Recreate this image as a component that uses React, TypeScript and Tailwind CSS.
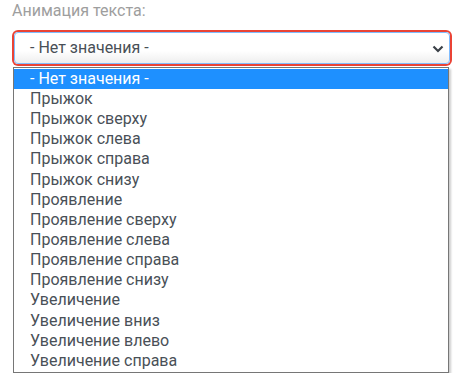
import React from "react";

const items = [
  "Прыжок",
  "Прыжок сверху",
  "Прыжок слева",
  "Прыжок справа",
  "Прыжок снизу",
  "Проявление",
  "Проявление сверху",
  "Проявление слева",
  "Проявление справа",
  "Проявление снизу",
  "Увеличение",
  "Увеличение вниз",
  "Увеличение влево",
  "Увеличение справа",
];

export default function App() {
  return (
    <div
      className="relative w-[453px] h-[373px] bg-white pl-[14px] overflow-hidden"
      style={{ fontFamily: "Roboto, 'Noto Sans', sans-serif" }}
    >
      <div className="h-[20px] leading-[20px] text-[16px] text-[#9e9e9e] -ml-[2px] pt-px">Анимация текста:</div>
      <div className="mt-[12px] w-[436px] h-[32px] rounded-[4px] border border-[#80bdff] shadow-[0_0_0_2px_#ea4335] bg-gradient-to-b from-white from-60% to-[#eeeeee] flex items-center justify-between pl-[15px] pr-[5px]">
        <span className="text-[16px] text-[#495057]">- Нет значения -</span>
        <svg width="12" height="8" viewBox="0 0 12 8" className="mt-[1px]">
          <path d="M1.5 1.5 L6 6 L10.5 1.5" fill="none" stroke="#3c4148" strokeWidth="2.2" />
        </svg>
      </div>
      <div className="absolute left-[13px] top-[67px] w-[436px] border border-[#767676] bg-white shadow-[2px_2px_2px_rgba(0,0,0,0.2)] text-[16px] leading-[20px] py-px">
        <div className="h-[20px] pl-[16px] bg-[#1e90ff] text-white">- Нет значения -</div>
        {items.map((t) => (
          <div key={t} className="h-[20.15px] pl-[16px] text-[#495057]">
            {t}
          </div>
        ))}
      </div>
    </div>
  );
}
